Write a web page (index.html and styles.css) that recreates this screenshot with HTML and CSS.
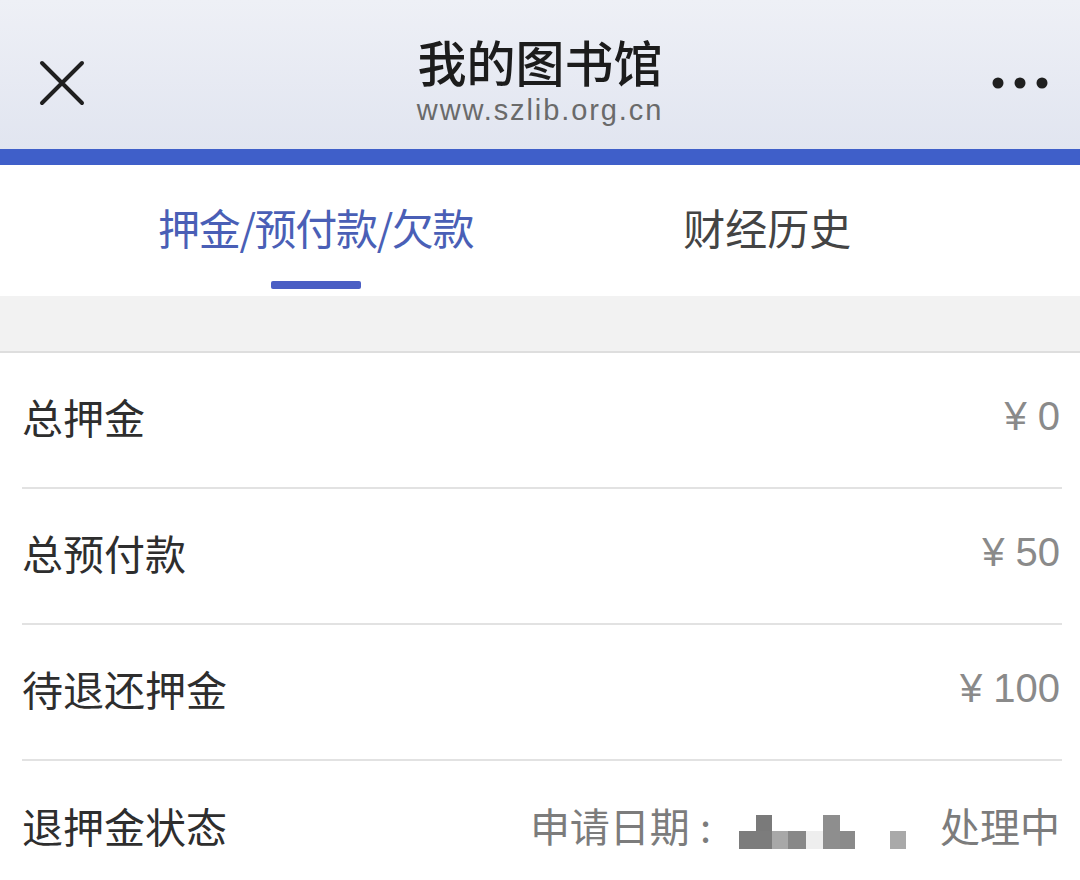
FILE: index.html
```html
<!DOCTYPE html>
<html lang="zh-CN">
<head>
<meta charset="utf-8">
<title>我的图书馆</title>
<link rel="stylesheet" href="styles.css">
</head>
<body>
<div class="page">
  <header class="navbar">
    <div class="nav-side nav-left">
      <svg class="icon-close" width="48" height="48" viewBox="0 0 48 48" aria-hidden="true">
        <path d="M4 4 L44 44 M44 4 L4 44" stroke="#1f1f1f" stroke-width="4" stroke-linecap="round" fill="none"/>
      </svg>
    </div>
    <div class="nav-center">
      <div class="nav-title">我的图书馆</div>
      <div class="nav-url">www.szlib.org.cn</div>
    </div>
    <div class="nav-side nav-right">
      <svg class="icon-more" width="56" height="12" viewBox="0 0 56 12" aria-hidden="true">
        <circle cx="6" cy="6" r="5.5" fill="#1f1f1f"/>
        <circle cx="28" cy="6" r="5.5" fill="#1f1f1f"/>
        <circle cx="50" cy="6" r="5.5" fill="#1f1f1f"/>
      </svg>
    </div>
  </header>
  <div class="progress"></div>

  <nav class="tabs">
    <div class="tab tab-active">押金/预付款/欠款<span class="tab-line"></span></div>
    <div class="tab">财经历史</div>
  </nav>
  <div class="band"></div>

  <ul class="list">
    <li class="row"><span class="label">总押金</span><span class="value">¥ 0</span></li>
    <li class="row"><span class="label">总预付款</span><span class="value">¥ 50</span></li>
    <li class="row"><span class="label">待退还押金</span><span class="value">¥ 100</span></li>
    <li class="row row-last">
      <span class="label">退押金状态</span>
      <span class="value status">
        <span class="muted">申请日期<span class="colon">:</span></span>
        <svg class="blur" width="167" height="34" viewBox="0 0 167 34" aria-hidden="true">
          <rect x="17" y="0" width="16" height="17" fill="#7a7a7a"/>
          <rect x="0" y="16" width="33" height="18" fill="#7c7c7c"/>
          <rect x="33" y="16" width="16" height="18" fill="#a8a8a8"/>
          <rect x="49" y="16" width="18" height="18" fill="#888"/>
          <rect x="67" y="16" width="17" height="18" fill="#eeeeee"/>
          <rect x="84" y="0" width="17" height="34" fill="#8e8e8e"/>
          <rect x="101" y="16" width="15" height="18" fill="#8a8a8a"/>
          <rect x="151" y="16" width="16" height="18" fill="#a9a9a9"/>
        </svg>
        <span>处理中</span>
      </span>
    </li>
  </ul>
</div>
</body>
</html>
```

FILE: styles.css
```css
* { box-sizing: border-box; }
html, body { margin: 0; padding: 0; background: #ffffff; }
body {
  font-family: "Liberation Sans", "Noto Sans CJK SC", sans-serif;
  width: 1080px;
  height: 880px;
  overflow: hidden;
}
.page { width: 1080px; }

.navbar {
  height: 149px;
  display: flex;
  align-items: center;
  background: linear-gradient(180deg, #eef0f6 0%, #e1e5f0 100%);
}
.nav-side { width: 200px; display: flex; align-items: center; }
.nav-left { padding-left: 38px; padding-top: 16px; }
.nav-right { justify-content: flex-end; padding-right: 32px; padding-top: 16px; }
.nav-center {
  flex: 1;
  display: flex;
  flex-direction: column;
  align-items: center;
  padding-top: 10px;
}
.nav-title {
  font-family: "Noto Sans CJK SC", sans-serif;
  font-size: 49px;
  font-weight: 500;
  color: #1c1c1c;
  line-height: 56px;
}
.nav-url {
  font-size: 29px;
  color: #6a6a6a;
  line-height: 34px;
  letter-spacing: 1.9px;
  margin-top: 4px;
}
.progress { height: 16px; background: #3f5fc9; }

.tabs {
  height: 131px;
  display: flex;
  align-items: center;
  padding-left: 158px;
  gap: 210px;
  font-family: "Noto Sans CJK SC", sans-serif;
  font-size: 42px;
}
.tab { position: relative; color: #444; line-height: 50px; padding-bottom: 8px; }
.tab-active { color: #4a5fb6; letter-spacing: -1.3px; }
.tab-line {
  position: absolute;
  left: 113px;
  top: 79px;
  width: 90px;
  height: 8px;
  border-radius: 2px;
  background: #4a5ec4;
}

.band {
  height: 57px;
  background: #f2f2f2;
  border-bottom: 2px solid #dedede;
}

.list { list-style: none; margin: 0; padding: 0 18px 0 22px; }
.row {
  height: 136px;
  display: flex;
  align-items: center;
  justify-content: space-between;
  padding-bottom: 8px;
  border-bottom: 2px solid #e2e2e2;
}
.row-last { border-bottom: none; }
.label {
  font-family: "Noto Sans CJK SC", sans-serif;
  font-size: 41px;
  color: #2e2e2e;
}
.value {
  font-size: 40px;
  color: #8a8a8a;
  padding-right: 2px;
}
.status {
  display: flex;
  align-items: center;
  font-family: "Noto Sans CJK SC", sans-serif;
  font-size: 40px;
  color: #7c7c7c;
}
.muted { margin-right: 28px; }
.colon { margin-left: 10px; }
.blur { margin-right: 34px; margin-top: 14px; }
```
